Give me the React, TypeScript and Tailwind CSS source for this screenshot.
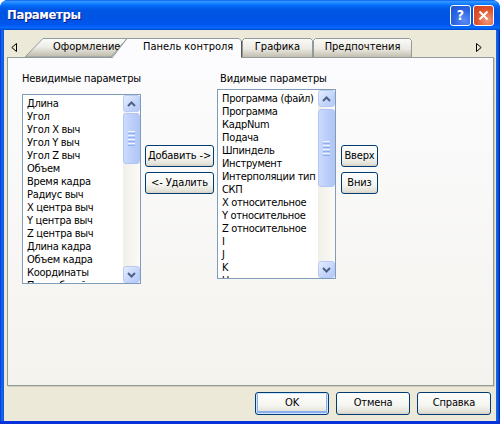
import React from "react";

const FONT = "[font-family:'DejaVu_Sans_Condensed','DejaVu_Sans',sans-serif] [font-stretch:condensed]";

const leftItems = [
  "Длина",
  "Угол",
  "Угол X выч",
  "Угол Y выч",
  "Угол Z выч",
  "Объем",
  "Время кадра",
  "Радиус выч",
  "X центра выч",
  "Y центра выч",
  "Z центра выч",
  "Длина кадра",
  "Объем кадра",
  "Координаты",
  "Путь общий",
];

const rightItems = [
  "Программа (файл)",
  "Программа",
  "КадрNum",
  "Подача",
  "Шпиндель",
  "Инструмент",
  "Интерполяции тип",
  "СКП",
  "X относительное",
  "Y относительное",
  "Z относительное",
  "I",
  "J",
  "K",
  "U",
];

function Chevron({ up }: { up?: boolean }) {
  return (
    <svg width="9" height="6" viewBox="0 0 9 6">
      {up ? (
        <path d="M1 5 L4.5 1.5 L8 5" fill="none" stroke="#4D6185" strokeWidth="2" />
      ) : (
        <path d="M1 1 L4.5 4.5 L8 1" fill="none" stroke="#4D6185" strokeWidth="2" />
      )}
    </svg>
  );
}

function ScrollBtn({ up }: { up?: boolean }) {
  return (
    <div className="flex h-[17px] w-[17px] shrink-0 items-center justify-center rounded-[3px] border border-[#B9CBF5] bg-[linear-gradient(135deg,#E5EDFE,#C4D5FB_60%,#B4C8F6)]">
      <Chevron up={up} />
    </div>
  );
}

function Thumb({ cls }: { cls: string }) {
  return (
    <div
      className={
        "flex w-[17px] flex-col items-center justify-center gap-[1px] rounded-[3px] border border-[#B1C6F6] bg-[linear-gradient(to_right,#CCDAFD,#BACDF9_60%,#B2C6F6)] " +
        cls
      }
    >
      <div className="h-[1px] w-[7px] bg-[#EEF4FE]" />
      <div className="h-[1px] w-[7px] bg-[#8CB0F8]" />
      <div className="h-[1px] w-[7px] bg-[#EEF4FE]" />
      <div className="h-[1px] w-[7px] bg-[#8CB0F8]" />
      <div className="h-[1px] w-[7px] bg-[#EEF4FE]" />
      <div className="h-[1px] w-[7px] bg-[#8CB0F8]" />
      <div className="h-[1px] w-[7px] bg-[#EEF4FE]" />
      <div className="h-[1px] w-[7px] bg-[#8CB0F8]" />
    </div>
  );
}

function ListBox({ items, left }: { items: string[]; left?: boolean }) {
  return (
    <div className="flex h-[190px] w-[119px] border border-[#7F9DB9] bg-white">
      <div className="flex-1 overflow-hidden pl-[4px] pt-[2px]">
        {items.map((t) => (
          <div key={t} className="h-[13px] whitespace-nowrap text-[11px] leading-[13px] tracking-[-0.3px] text-black">
            {t}
          </div>
        ))}
      </div>
      <div className="flex w-[17px] flex-col justify-between bg-[linear-gradient(to_right,#F1EFE8,#FBFAF6)]">
        <div className="flex flex-col">
          <ScrollBtn up />
          {left ? <Thumb cls="mt-[1px] h-[51px]" /> : <Thumb cls="mt-[2px] h-[78px]" />}
        </div>
        <ScrollBtn />
      </div>
    </div>
  );
}

function Btn({ children, cls, def }: { children: React.ReactNode; cls: string; def?: boolean }) {
  return (
    <div
      className={
        "flex items-center justify-center rounded-[3px] border border-[#003C74] bg-[linear-gradient(to_bottom,#FFFFFF,#F4F4F0_60%,#E3E1D7_90%,#D6D0C5)] text-[11px] tracking-[-0.15px] text-black " +
        (def ? "shadow-[inset_0_0_0_1px_#CEE7FF,inset_0_-1px_0_2px_#8CAEF0] " : "") +
        cls
      }
    >
      {children}
    </div>
  );
}

function TabStrip() {
  return (
    <div className="relative z-10 flex h-[27px] items-end">
      <div className="flex h-[19px] w-[21px] items-center pl-[7px]">
        <svg width="6" height="9" viewBox="0 0 6 9">
          <path d="M5.5 0.5 L0.8 4.5 L5.5 8.5 Z" fill="none" stroke="#000" strokeWidth="1" />
        </svg>
      </div>
      {/* Оформление */}
      <div className="relative flex h-[19px] w-[102px] items-center pl-[28px] text-[11px] text-black">
        <svg className="absolute inset-0" width="102" height="19" viewBox="0 0 102 19">
          <defs>
            <linearGradient id="tg1" x1="0" y1="0" x2="0" y2="1">
              <stop offset="0" stopColor="#FDFDFB" />
              <stop offset="0.45" stopColor="#EEEDE7" />
              <stop offset="1" stopColor="#BDB9A9" />
            </linearGradient>
          </defs>
          <path d="M0 19 L18 0.5 L102 0.5 L86 19 Z" fill="url(#tg1)" stroke="#919B9C" strokeWidth="1" />
        </svg>
        <span className="relative">Оформление</span>
      </div>
      {/* selected */}
      <div className="relative -mb-[1px] ml-[-15px] flex h-[20px] w-[130px] items-center pb-[1px] pl-[31px] text-[11px] text-black">
        <svg className="absolute inset-0" width="130" height="20" viewBox="0 0 130 20">
          <path d="M0 20 L15 0.5 L127 0.5 L129.5 3 L129.5 20" fill="#FCFCFE" stroke="#919B9C" strokeWidth="1" />
          <path d="M129.5 3 L129.5 19" fill="none" stroke="#555" strokeWidth="1" />
        </svg>
        <span className="relative">Панель контроля</span>
      </div>
      {/* Графика */}
      <div className="relative flex h-[19px] w-[71px] items-center justify-center text-[11px] text-black">
        <svg className="absolute inset-0" width="71" height="19" viewBox="0 0 71 19">
          <defs>
            <linearGradient id="tg2" x1="0" y1="0" x2="0" y2="1">
              <stop offset="0" stopColor="#FBFBF8" />
              <stop offset="0.55" stopColor="#ECEAE2" />
              <stop offset="1" stopColor="#C2BEAF" />
            </linearGradient>
          </defs>
          <path d="M0.5 19 L0.5 2.5 L2.5 0.5 L68.5 0.5 L70.5 2.5 L70.5 19" fill="url(#tg2)" stroke="#919B9C" strokeWidth="1" />
        </svg>
        <span className="relative">Графика</span>
      </div>
      {/* Предпочтения */}
      <div className="relative flex h-[19px] w-[99px] items-center justify-center text-[11px] text-black">
        <svg className="absolute inset-0" width="99" height="19" viewBox="0 0 99 19">
          <defs>
            <linearGradient id="tg3" x1="0" y1="0" x2="0" y2="1">
              <stop offset="0" stopColor="#FBFBF8" />
              <stop offset="0.55" stopColor="#ECEAE2" />
              <stop offset="1" stopColor="#C2BEAF" />
            </linearGradient>
          </defs>
          <path d="M0.5 19 L0.5 2.5 L2.5 0.5 L96.5 0.5 L98.5 2.5 L98.5 19" fill="url(#tg3)" stroke="#919B9C" strokeWidth="1" />
        </svg>
        <span className="relative">Предпочтения</span>
      </div>
      <div className="flex h-[19px] flex-1 items-center justify-end pr-[14px]">
        <svg width="6" height="9" viewBox="0 0 6 9">
          <path d="M0.5 0.5 L5.2 4.5 L0.5 8.5 Z" fill="none" stroke="#000" strokeWidth="1" />
        </svg>
      </div>
    </div>
  );
}

export default function App() {
  return (
    <div className={"h-[424px] w-[500px] overflow-hidden bg-white " + FONT}>
      <div className="flex h-[424px] w-[500px] flex-col overflow-hidden rounded-t-[8px] bg-[#0054E3]">
        {/* Title bar */}
        <div className="flex h-[30px] shrink-0 items-center justify-between bg-[linear-gradient(to_bottom,#0058EE_0%,#3593FF_4%,#288EFF_8%,#127DFF_13%,#036FFC_18%,#0262EE_24%,#0057E5_32%,#0054E3_55%,#0055EB_78%,#005BF5_86%,#026AFE_91%,#0062EF_95%,#0043CF_100%)] pl-[7px] pr-[6px]">
          <span className="text-[13px] font-bold tracking-[-0.4px] text-white [text-shadow:1px_1px_0_#0A1883]">
            Параметры
          </span>
          <div className="flex gap-[2px]">
            <div className="flex h-[21px] w-[21px] items-center justify-center rounded-[3px] border border-white bg-[radial-gradient(circle_at_70%_75%,#5C8DF5,#2A63E0_55%,#1E52D0)] text-[14px] font-bold leading-none text-white">
              ?
            </div>
            <div className="flex h-[21px] w-[21px] items-center justify-center rounded-[3px] border border-white bg-[radial-gradient(circle_at_70%_75%,#F09A7D,#E0522B_55%,#C8401F)]">
              <svg width="11" height="11" viewBox="0 0 11 11">
                <path d="M1.5 1.5 L9.5 9.5 M9.5 1.5 L1.5 9.5" stroke="#fff" strokeWidth="2" />
              </svg>
            </div>
          </div>
        </div>
        {/* Body */}
        <div className="flex flex-1">
          <div className="w-[4px] bg-[linear-gradient(to_right,#0831D9,#166AEE_45%,#0855DD)]" />
          <div className="flex flex-1 flex-col bg-[#ECE9D8]">
            <TabStrip />
            <div className="ml-[3px] flex h-[329px] w-[487px] border border-[#919B9C] bg-[linear-gradient(to_bottom,#FCFCFE,#F4F3EE)] pl-[14px] pt-[14px] shadow-[1px_1px_0_#D0CEBF]">
              {/* left column */}
              <div className="flex w-[119px] shrink-0 flex-col">
                <div className="h-[13px] whitespace-nowrap text-[11px] leading-[13px] tracking-[-0.15px] text-black">
                  Невидимые параметры
                </div>
                <div className="mt-[9px]">
                  <ListBox items={leftItems} left />
                </div>
              </div>
              {/* add/remove */}
              <div className="ml-[4px] mt-[73px] flex shrink-0 flex-col gap-[5px]">
                <Btn cls="h-[22px] w-[69px]">Добавить -&gt;</Btn>
                <Btn cls="h-[22px] w-[69px]">&lt;- Удалить</Btn>
              </div>
              {/* right column */}
              <div className="ml-[3px] flex w-[119px] shrink-0 flex-col">
                <div className="h-[13px] whitespace-nowrap pl-[3px] text-[11px] leading-[13px] tracking-[-0.15px] text-black">
                  Видимые параметры
                </div>
                <div className="mt-[4px]">
                  <ListBox items={rightItems} />
                </div>
              </div>
              {/* up/down */}
              <div className="ml-[5px] mt-[73px] flex shrink-0 flex-col gap-[5px]">
                <Btn cls="h-[22px] w-[37px]">Вверх</Btn>
                <Btn cls="h-[22px] w-[37px]">Вниз</Btn>
              </div>
            </div>
            <div className="mt-[6px] flex justify-end gap-[7px] pr-[5px]">
              <Btn cls="h-[23px] w-[74px]" def>
                OK
              </Btn>
              <Btn cls="h-[23px] w-[74px]">Отмена</Btn>
              <Btn cls="h-[23px] w-[74px]">Справка</Btn>
            </div>
          </div>
          <div className="w-[4px] bg-[linear-gradient(to_left,#001DA0,#0855DD_45%,#166AEE)]" />
        </div>
        <div className="h-[3px] shrink-0 bg-[#0831D9]" />
      </div>
    </div>
  );
}
